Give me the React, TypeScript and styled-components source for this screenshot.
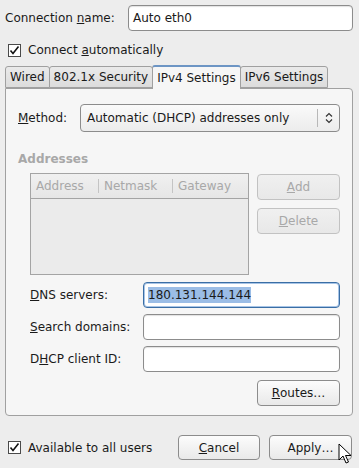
import styled, { createGlobalStyle } from 'styled-components';

const GlobalStyle = createGlobalStyle`
  html, body {
    margin: 0;
    padding: 0;
    background: #ededed;
  }
  body {
    font-family: 'DejaVu Sans', 'Liberation Sans', sans-serif;
    font-size: 12px;
    color: #1a1a1a;
  }
`;

const Window = styled.div`
  position: relative;
  width: 359px;
  height: 468px;
  box-sizing: border-box;
  padding: 5px 6px 0 5px;
  display: flex;
  flex-direction: column;
`;

const NameRow = styled.div`
  display: flex;
  align-items: center;
  height: 26px;
`;

const NameLabel = styled.label`
  width: 123px;
`;

const TextField = styled.div<{ $focus?: boolean }>`
  flex: 1;
  height: 26px;
  box-sizing: border-box;
  background: #fff;
  border: 1px solid ${(p) => (p.$focus ? '#3a6ea5' : '#8c8c8c')};
  border-radius: 4px;
  box-shadow: ${(p) => (p.$focus ? '0 0 0 1px #a7c4e6 inset' : 'inset 0 1px 1px rgba(0,0,0,0.12)')};
  display: flex;
  align-items: center;
  padding: 0 4px;
`;

const Selected = styled.span`
  background: #9bbde6;
  padding: 1px 0;
`;

const CheckRow = styled.div<{ $top?: number }>`
  display: flex;
  align-items: center;
  gap: 7px;
  padding-left: 3px;
  margin-top: ${(p) => p.$top ?? 0}px;
  height: 16px;
`;

const Box = styled.span`
  width: 11px;
  height: 11px;
  border: 1px solid #4a4a4a;
  background: #fff;
  display: flex;
  align-items: center;
  justify-content: center;
`;

const Tabs = styled.div`
  display: flex;
  align-items: flex-end;
  margin-top: 7px;
  height: 23px;
`;

const Tab = styled.div<{ $active?: boolean }>`
  height: ${(p) => (p.$active ? 24 : 22)}px;
  box-sizing: border-box;
  padding: 0 4px;
  display: flex;
  align-items: center;
  border: 1px solid #a0a0a0;
  border-bottom: ${(p) => (p.$active ? 'none' : '1px solid #a0a0a0')};
  border-top: ${(p) => (p.$active ? '2px solid #6d95c4' : '1px solid #a0a0a0')};
  border-radius: 3px 3px 0 0;
  background: ${(p) => (p.$active ? '#f6f6f6' : 'linear-gradient(#eaeaea, #dcdcdc)')};
  margin-right: -1px;
  position: relative;
  z-index: ${(p) => (p.$active ? 1 : 0)};
  margin-bottom: ${(p) => (p.$active ? -1 : 0)}px;
`;

const Panel = styled.div`
  height: 328px;
  box-sizing: border-box;
  background: #f6f6f6;
  border: 1px solid #a0a0a0;
  border-radius: 0 4px 4px 4px;
  padding: 15px 12px 0 12px;
  display: flex;
  flex-direction: column;
`;

const MethodRow = styled.div`
  display: flex;
  align-items: center;
  height: 28px;
`;

const MethodLabel = styled.span`
  width: 62px;
`;

const Select = styled.div`
  flex: 1;
  height: 28px;
  box-sizing: border-box;
  border: 1px solid #8c8c8c;
  border-radius: 4px;
  background: linear-gradient(#fafafa, #ececec);
  display: flex;
  align-items: center;
  padding-left: 6px;
`;

const SelectText = styled.span`
  flex: 1;
`;

const SelectArrows = styled.span`
  width: 21px;
  height: 18px;
  border-left: 1px solid #b8b8b8;
  display: flex;
  align-items: center;
  justify-content: center;
`;

const SectionTitle = styled.div`
  margin-top: 20px;
  font-weight: bold;
  color: #a8a8a8;
`;

const AddressArea = styled.div`
  display: flex;
  gap: 8px;
  margin-top: 7px;
  padding-left: 12px;
`;

const Table = styled.div`
  width: 219px;
  height: 102px;
  box-sizing: border-box;
  border: 1px solid #a4a4a4;
  background: #ebebeb;
`;

const HeaderRow = styled.div`
  display: flex;
  height: 24px;
  border-bottom: 1px solid #a4a4a4;
  background: linear-gradient(#f0f0f0, #e6e6e6);
  color: #a8a8a8;
`;

const HeaderCell = styled.div<{ $w: number; $last?: boolean }>`
  width: ${(p) => p.$w}px;
  display: flex;
  align-items: center;
  padding-left: 5px;
  box-sizing: border-box;
  position: relative;
  &::after {
    content: '';
    display: ${(p) => (p.$last ? 'none' : 'block')};
    position: absolute;
    right: 0;
    top: 5px;
    bottom: 5px;
    width: 1px;
    background: #c4c4c4;
  }
`;

const ButtonColumn = styled.div`
  display: flex;
  flex-direction: column;
  gap: 8px;
  padding-top: 1px;
`;

const Button = styled.div<{ $disabled?: boolean; $w?: number; $h?: number }>`
  width: ${(p) => p.$w ?? 83}px;
  height: ${(p) => p.$h ?? 26}px;
  box-sizing: border-box;
  border: 1px solid ${(p) => (p.$disabled ? '#c2c2c2' : '#8c8c8c')};
  border-radius: 4px;
  background: ${(p) => (p.$disabled ? 'linear-gradient(#f0f0f0, #e8e8e8)' : 'linear-gradient(#fcfcfc, #e9e9e9)')};
  color: ${(p) => (p.$disabled ? '#a8a8a8' : '#1a1a1a')};
  display: flex;
  align-items: center;
  justify-content: center;
`;

const FormRows = styled.div`
  display: flex;
  flex-direction: column;
  gap: 6px;
  margin-top: 7px;
  padding-left: 12px;
`;

const FormRow = styled.div`
  display: flex;
  align-items: center;
`;

const FormLabel = styled.span`
  width: 113px;
`;

const RoutesRow = styled.div`
  display: flex;
  justify-content: flex-end;
  margin-top: 8px;
`;

const Footer = styled.div`
  display: flex;
  align-items: center;
  margin-top: 19px;
`;

const FooterButtons = styled.div`
  margin-left: auto;
  display: flex;
  gap: 9px;
  padding-right: 1px;
`;

const Cursor = styled.svg`
  position: absolute;
  left: 338px;
  top: 443px;
`;

const Check = () => (
  <Box>
    <svg width="11" height="11" viewBox="0 0 11 11">
      <path d="M1.5 5.5 L4 8.5 L9.5 1.5" fill="none" stroke="#111" strokeWidth="1.6" />
    </svg>
  </Box>
);

export default function App() {
  return (
    <>
      <GlobalStyle />
      <Window>
        <NameRow>
          <NameLabel>
            Connection <u>n</u>ame:
          </NameLabel>
          <TextField>Auto eth0</TextField>
        </NameRow>
        <CheckRow $top={11}>
          <Check />
          <span>
            Connect <u>a</u>utomatically
          </span>
        </CheckRow>
        <Tabs>
          <Tab>Wired</Tab>
          <Tab>802.1x Security</Tab>
          <Tab $active>IPv4 Settings</Tab>
          <Tab>IPv6 Settings</Tab>
        </Tabs>
        <Panel>
          <MethodRow>
            <MethodLabel>
              <u>M</u>ethod:
            </MethodLabel>
            <Select>
              <SelectText>Automatic (DHCP) addresses only</SelectText>
              <SelectArrows>
                <svg width="8" height="12" viewBox="0 0 8 12">
                  <path d="M1 4.5 L4 1.5 L7 4.5 M1 7.5 L4 10.5 L7 7.5" fill="none" stroke="#333" strokeWidth="1.2" />
                </svg>
              </SelectArrows>
            </Select>
          </MethodRow>
          <SectionTitle>Addresses</SectionTitle>
          <AddressArea>
            <Table>
              <HeaderRow>
                <HeaderCell $w={68}>Address</HeaderCell>
                <HeaderCell $w={74}>Netmask</HeaderCell>
                <HeaderCell $w={75} $last>
                  Gateway
                </HeaderCell>
              </HeaderRow>
            </Table>
            <ButtonColumn>
              <Button $disabled>
                <u>A</u>dd
              </Button>
              <Button $disabled>
                <u>D</u>elete
              </Button>
            </ButtonColumn>
          </AddressArea>
          <FormRows>
            <FormRow>
              <FormLabel>
                <u>D</u>NS servers:
              </FormLabel>
              <TextField $focus>
                <Selected>180.131.144.144</Selected>
              </TextField>
            </FormRow>
            <FormRow>
              <FormLabel>
                <u>S</u>earch domains:
              </FormLabel>
              <TextField />
            </FormRow>
            <FormRow>
              <FormLabel>
                D<u>H</u>CP client ID:
              </FormLabel>
              <TextField />
            </FormRow>
          </FormRows>
          <RoutesRow>
            <Button>
              <u>R</u>outes…
            </Button>
          </RoutesRow>
        </Panel>
        <Footer>
          <CheckRow>
            <Check />
            <span>Available to all users</span>
          </CheckRow>
          <FooterButtons>
            <Button $w={82} $h={25}>
              <u>C</u>ancel
            </Button>
            <Button $w={83} $h={25}>
              Apply…
            </Button>
          </FooterButtons>
        </Footer>
        <Cursor width="14" height="22" viewBox="0 0 14 22">
          <path d="M1 1 L1 17 L5 13 L8 20 L10.5 19 L7.5 12.5 L13 12.5 Z" fill="#fff" stroke="#000" strokeWidth="1" strokeLinejoin="round" />
        </Cursor>
      </Window>
    </>
  );
}
